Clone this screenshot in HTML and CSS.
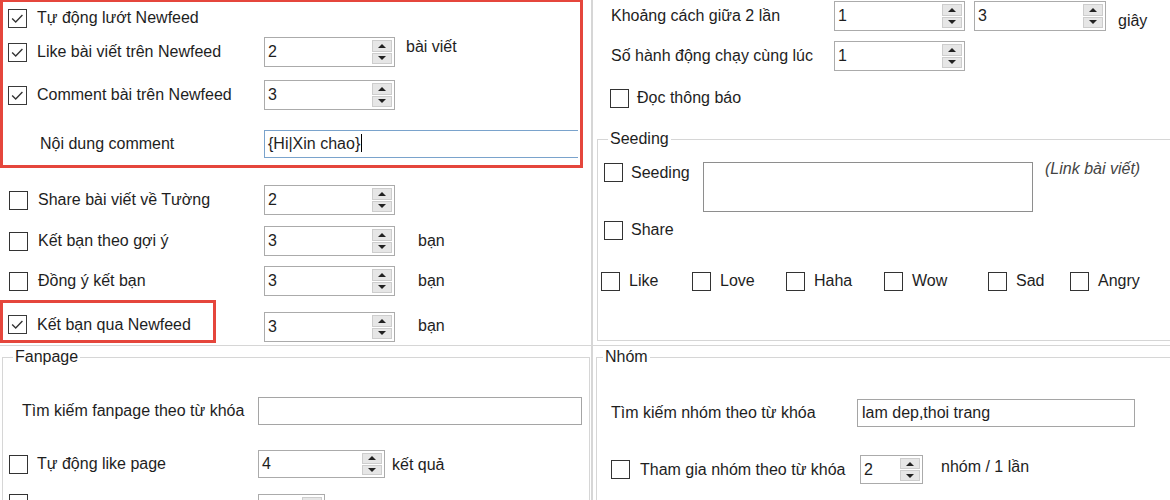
FILE: index.html
```html
<!DOCTYPE html>
<html lang="vi">
<head>
<meta charset="utf-8">
<title>Cấu hình tương tác</title>
<link rel="stylesheet" href="styles.css">
</head>
<body>
<div class="app">
  <!-- top left -->
  <section class="tl">
    <div class="hl">
      <div class="row r1">
        <div class="lab"><span class="cb on"><svg viewBox="0 0 19 19"><polyline points="3.5,9.5 7.5,13.5 15,5.5"/></svg></span><span>Tự động lướt Newfeed</span></div>
      </div>
      <div class="row r2">
        <div class="lab"><span class="cb on"><svg viewBox="0 0 19 19"><polyline points="3.5,9.5 7.5,13.5 15,5.5"/></svg></span><span>Like bài viết trên Newfeed</span></div>
        <div class="spin w131"><span class="val">2</span><span class="btns"><i class="up"></i><i class="dn"></i></span></div>
        <span class="unit u-up">bài viết</span>
      </div>
      <div class="row r3">
        <div class="lab"><span class="cb on"><svg viewBox="0 0 19 19"><polyline points="3.5,9.5 7.5,13.5 15,5.5"/></svg></span><span>Comment bài trên Newfeed</span></div>
        <div class="spin w131"><span class="val">3</span><span class="btns"><i class="up"></i><i class="dn"></i></span></div>
      </div>
      <div class="row r4">
        <div class="lab plain">Nội dung comment</div>
        <div class="txt focus">{Hi|Xin chao}<span class="caret"></span></div>
      </div>
    </div>

    <div class="row r5">
      <div class="lab"><span class="cb"></span><span>Share bài viết về Tường</span></div>
      <div class="spin w131"><span class="val">2</span><span class="btns"><i class="up"></i><i class="dn"></i></span></div>
    </div>
    <div class="row r6">
      <div class="lab"><span class="cb"></span><span>Kết bạn theo gợi ý</span></div>
      <div class="spin w131"><span class="val">3</span><span class="btns"><i class="up"></i><i class="dn"></i></span></div>
      <span class="unit ban">bạn</span>
    </div>
    <div class="row r7">
      <div class="lab"><span class="cb"></span><span>Đồng ý kết bạn</span></div>
      <div class="spin w131"><span class="val">3</span><span class="btns"><i class="up"></i><i class="dn"></i></span></div>
      <span class="unit ban">bạn</span>
    </div>
    <div class="row r8">
      <div class="hl-small"><span class="cb on"><svg viewBox="0 0 19 19"><polyline points="3.5,9.5 7.5,13.5 15,5.5"/></svg></span><span>Kết bạn qua Newfeed</span></div>
      <div class="spin w131"><span class="val">3</span><span class="btns"><i class="up"></i><i class="dn"></i></span></div>
      <span class="unit ban">bạn</span>
    </div>
  </section>

  <!-- top right -->
  <section class="tr">
    <div class="row ra">
      <div class="rlab">Khoảng cách giữa 2 lần</div>
      <div class="spin w131"><span class="val">1</span><span class="btns"><i class="up"></i><i class="dn"></i></span></div>
      <div class="spin w132 gap9"><span class="val">3</span><span class="btns"><i class="up"></i><i class="dn"></i></span></div>
      <span class="unit giay">giây</span>
    </div>
    <div class="row rb">
      <div class="rlab">Số hành động chạy cùng lúc</div>
      <div class="spin w131"><span class="val">1</span><span class="btns"><i class="up"></i><i class="dn"></i></span></div>
    </div>
    <div class="row rc">
      <span class="cb"></span><span class="cbt">Đọc thông báo</span>
    </div>

    <fieldset class="grp seeding">
      <legend>Seeding</legend>
      <div class="row s1">
        <div class="slab"><span class="cb"></span><span class="cbt">Seeding</span></div>
        <div class="area"></div>
        <span class="hint">(Link bài viết)</span>
      </div>
      <div class="row s2">
        <span class="cb"></span><span class="cbt">Share</span>
      </div>
      <div class="row s3">
        <div class="re re-like"><span class="cb"></span><span>Like</span></div>
        <div class="re re-love"><span class="cb"></span><span>Love</span></div>
        <div class="re re-haha"><span class="cb"></span><span>Haha</span></div>
        <div class="re re-wow"><span class="cb"></span><span>Wow</span></div>
        <div class="re re-sad"><span class="cb"></span><span>Sad</span></div>
        <div class="re"><span class="cb"></span><span>Angry</span></div>
      </div>
    </fieldset>
  </section>

  <!-- bottom left -->
  <section class="bl">
    <fieldset class="grp fanpage">
      <legend>Fanpage</legend>
      <div class="row f1">
        <div class="flab">Tìm kiếm fanpage theo từ khóa</div>
        <div class="txt w324"></div>
      </div>
      <div class="row f2">
        <div class="flab2"><span class="cb"></span><span>Tự động like page</span></div>
        <div class="spin w127 h28"><span class="val">4</span><span class="btns"><i class="up"></i><i class="dn"></i></span></div>
        <span class="unit kq">kết quả</span>
      </div>
      <div class="row f3">
        <div class="flab2"><span class="cb"></span><span></span></div>
        <div class="spin w67 h28"><span class="val"></span><span class="btns"><i class="up"></i><i class="dn"></i></span></div>
      </div>
    </fieldset>
  </section>

  <!-- bottom right -->
  <section class="br">
    <fieldset class="grp nhom">
      <legend>Nhóm</legend>
      <div class="row n1">
        <div class="nlab">Tìm kiếm nhóm theo từ khóa</div>
        <div class="txt w278">lam dep,thoi trang</div>
      </div>
      <div class="row n2">
        <div class="nlab2"><span class="cb"></span><span>Tham gia nhóm theo từ khóa</span></div>
        <div class="spin w63 h29"><span class="val">2</span><span class="btns"><i class="up"></i><i class="dn"></i></span></div>
        <span class="unit nl">nhóm / 1 lần</span>
      </div>
    </fieldset>
  </section>
</div>
</body>
</html>
```
FILE: styles.css
```css
* { box-sizing: border-box; }
html, body { margin: 0; padding: 0; background: #fff; }
body {
  font-family: "Liberation Sans", Arial, sans-serif;
  font-size: 16px;
  color: #1e1e1e;
}
.app {
  width: 1170px;
  height: 500px;
  overflow: hidden;
  display: grid;
  grid-template-columns: 593px 1fr;
  grid-template-rows: 346px 154px;
}
.row { display: flex; align-items: center; }

/* checkbox */
.cb {
  flex: none;
  width: 19px;
  height: 19px;
  border: 1px solid #333;
  background: #fff;
  display: inline-block;
}
.cb svg { display: block; width: 17px; height: 17px; }
.cb svg polyline { fill: none; stroke: #333; stroke-width: 1.5; }
.cb.on { border-color: #3a3a3a; }

/* spinner */
.spin {
  flex: none;
  height: 30px;
  border: 1px solid #ababab;
  background: #fff;
  display: flex;
  align-items: stretch;
}
.spin .val { flex: 1; padding-left: 3px; line-height: 28px; }
.spin .btns {
  width: 20px;
  margin: 2px 2px 2px 0;
  display: flex;
  flex-direction: column;
  gap: 1px;
}
.spin .btns i {
  flex: 1;
  background: #e6e6e6;
  border: 1px solid #cdcdcd;
  display: flex;
  align-items: center;
  justify-content: center;
}
.spin .btns i::before {
  content: "";
  width: 0; height: 0;
  border-left: 4px solid transparent;
  border-right: 4px solid transparent;
}
.spin .btns i.up::before { border-bottom: 4px solid #222; }
.spin .btns i.dn::before { border-top: 4px solid #222; }
.w131 { width: 131px; }
.w132 { width: 132px; }
.w127 { width: 127px; }
.w67 { width: 67px; }
.w63 { width: 63px; }
.h28 { height: 28px; }
.h28 .val { line-height: 26px; }
.h29 { height: 29px; }
.h29 .val { line-height: 27px; }
.gap9 { margin-left: 9px; }

/* text boxes */
.txt {
  flex: none;
  height: 28px;
  border: 1px solid #a5a5a5;
  background: #fff;
  padding-left: 4px;
  line-height: 26px;
  white-space: nowrap;
}
.txt.focus {
  width: 314px;
  border-color: #7aa3cc;
  border-right: none;
  padding-left: 3px;
}
.caret {
  display: inline-block;
  width: 1px;
  height: 18px;
  background: #000;
  vertical-align: -3px;
  margin-left: 1px;
}
.w324 { width: 324px; }
.w278 { width: 278px; }

.unit { flex: none; }

/* ---------- top left ---------- */
.tl {
  border-right: 2px solid #d6d6d6;
  border-bottom: 1px solid #d6d6d6;
}
.hl {
  margin-top: -1px;
  width: 583px;
  border: 3px solid #e5463c;
  padding: 0 0 5px 5px;
}
.lab {
  flex: none;
  width: 256px;
  display: flex;
  align-items: center;
  gap: 10px;
}
.lab.plain { padding-left: 32px; }
.r1 { height: 32px; }
.r2 { height: 36px; }
.r3 { height: 34px; margin-top: 8px; }
.r4 { height: 32px; margin-top: 16px; }
.u-up { margin-left: 11px; margin-bottom: 10px; }

.r5, .r6, .r7 { height: 32px; padding-left: 9px; }
.r5 .lab, .r6 .lab, .r7 .lab { width: 255px; }
.r5 { margin-top: 16px; }
.r6 { margin-top: 9px; }
.r7 { margin-top: 8px; }
.ban { margin-left: 23px; }
.r8 { margin-top: 3px; height: 43px; align-items: flex-start; }
.hl-small {
  width: 216px;
  height: 43px;
  border: 3px solid #e5463c;
  padding: 6px 0 0 5px;
  display: flex;
  align-items: center;
  gap: 10px;
}
.r8 .spin { margin: 12px 0 0 48px; }
.r8 .unit { margin-top: 17px; }

/* ---------- top right ---------- */
.tr {
  border-bottom: 1px solid #d6d6d6;
}
.rlab { flex: none; width: 223px; }
.ra { height: 30px; margin-top: 1px; padding-left: 18px; }
.giay { margin-left: 12px; margin-top: 10px; }
.rb { height: 30px; margin-top: 10px; padding-left: 18px; }
.rc { height: 20px; margin-top: 17px; padding-left: 17px; }
.cbt { margin-left: 8px; }

.grp {
  margin: 0;
  padding: 0;
  border: 1px solid #d6d6d6;
  min-width: 0;
}
.grp legend {
  padding: 0 2px;
  line-height: 20px;
  font-size: 16px;
}
.seeding {
  margin: 21px -20px 0 4px;
  height: 212px;
}
.seeding legend { margin-left: 10px; }
.slab { flex: none; width: 99px; display: flex; align-items: center; }
.s1 { align-items: flex-start; margin-top: 13px; padding-left: 6px; }
.s1 .slab { margin-top: 1px; }
.area {
  flex: none;
  width: 330px;
  height: 50px;
  border: 1px solid #8e8e8e;
}
.hint {
  margin-left: 12px;
  margin-top: -2px;
  font-style: italic;
  color: #444;
  font-size: 16px;
}
.s2 { margin-top: 8px; padding-left: 6px; height: 20px; }
.s3 { margin-top: 31px; padding-left: 3px; height: 20px; }
.re { display: flex; align-items: center; gap: 9px; flex: none; }
.re-like { width: 91px; }
.re-love { width: 94px; }
.re-haha { width: 98px; }
.re-wow { width: 104px; }
.re-sad { width: 82px; }

/* ---------- bottom left ---------- */
.bl { border-right: 2px solid #d6d6d6; }
.fanpage {
  margin: 1px 0 0 2px;
  width: 588px;
  height: 180px;
}
.fanpage legend { margin-left: 10px; }
.flab { flex: none; width: 255px; padding-left: 19px; }
.f1 { margin-top: 30px; height: 28px; }
.f2 { margin-top: 25px; height: 28px; padding-left: 6px; }
.flab2 { flex: none; width: 249px; display: flex; align-items: center; gap: 9px; }
.kq { margin-left: 7px; margin-top: 2px; }
.f3 { margin-top: 16px; height: 28px; padding-left: 6px; align-items: flex-start; }

/* ---------- bottom right ---------- */
.nhom {
  margin: 1px -20px 0 3px;
  height: 180px;
}
.nhom legend { margin-left: 6px; }
.nlab { flex: none; width: 246px; }
.n1 { margin-top: 32px; height: 28px; padding-left: 14px; }
.n2 { margin-top: 28px; height: 29px; padding-left: 14px; }
.nlab2 { flex: none; width: 249px; display: flex; align-items: center; gap: 10px; white-space: nowrap; }
.nl { margin-left: 18px; margin-bottom: 6px; }
```
